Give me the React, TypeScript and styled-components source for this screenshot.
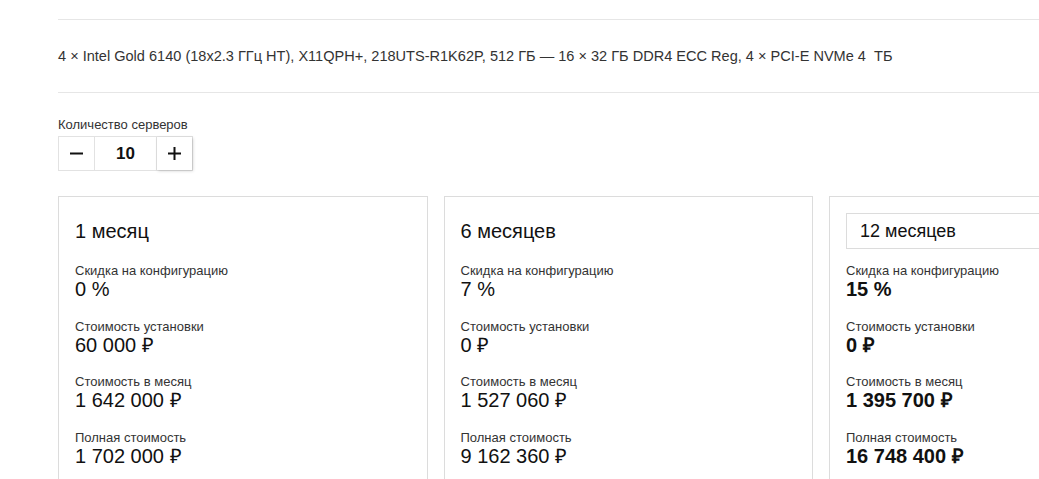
import React from "react";
import styled, { createGlobalStyle } from "styled-components";

const Global = createGlobalStyle`
  html, body {
    margin: 0;
    padding: 0;
    height: 479px;
    overflow: hidden;
    background: #fff;
  }
  body {
    font-family: "Liberation Sans", Arial, sans-serif;
    color: #111;
  }
`;

const Page = styled.div`
  padding-left: 58px;
  overflow: hidden;
`;

const Spec = styled.div`
  margin-top: 19px;
  border-top: 1px solid #e6e6e6;
  border-bottom: 1px solid #e6e6e6;
  padding: 26px 0;
  font-size: 14.55px;
  line-height: 20px;
  color: #333;
  white-space: nowrap;
`;

const QtyLabel = styled.div`
  margin-top: 24px;
  font-size: 13px;
  line-height: 15px;
  color: #333;
`;

const Stepper = styled.div`
  margin-top: 4px;
  display: inline-flex;
  height: 35px;
  border: 1px solid #e2e2e2;
  box-sizing: border-box;
`;

const StepButton = styled.div<{ $w: number; $shadow?: boolean }>`
  width: ${(p) => p.$w}px;
  display: flex;
  align-items: center;
  justify-content: center;
  box-shadow: ${(p) => (p.$shadow ? "1px 1px 3px rgba(0,0,0,0.18)" : "none")};
  color: #111;
`;

const StepValue = styled.div`
  width: 61px;
  border-left: 1px solid #e2e2e2;
  border-right: 1px solid #e2e2e2;
  display: flex;
  align-items: center;
  justify-content: center;
  font-size: 17px;
  font-weight: 700;
  color: #111;
`;

const Cards = styled.div`
  margin-top: 25px;
  display: grid;
  grid-template-columns: repeat(3, 369.5px);
  gap: 16px;
  width: max-content;
`;

const Card = styled.div`
  border: 1px solid #dcdcdc;
  padding: 16px;
  height: 320px;
`;

const Title = styled.div`
  height: 36px;
  line-height: 36px;
  font-size: 20px;
  color: #111;
`;

const SelectBox = styled.div`
  height: 36px;
  box-sizing: border-box;
  border: 1px solid #dcdcdc;
  padding-left: 13px;
  line-height: 34px;
  font-size: 18px;
  color: #111;
`;

const Items = styled.div`
  margin-top: 14px;
  display: flex;
  flex-direction: column;
  gap: 18.6px;
`;

const ItemLabel = styled.div`
  font-size: 13px;
  line-height: 15px;
  color: #333;
`;

const ItemValue = styled.div<{ $bold?: boolean }>`
  font-size: 20px;
  line-height: 22px;
  font-weight: ${(p) => (p.$bold ? 700 : 400)};
  color: #111;
`;

type Plan = {
  title: string;
  select?: boolean;
  bold?: boolean;
  values: string[];
};

const labels = [
  "Скидка на конфигурацию",
  "Стоимость установки",
  "Стоимость в месяц",
  "Полная стоимость",
];

const plans: Plan[] = [
  { title: "1 месяц", values: ["0 %", "60 000 ₽", "1 642 000 ₽", "1 702 000 ₽"] },
  { title: "6 месяцев", values: ["7 %", "0 ₽", "1 527 060 ₽", "9 162 360 ₽"] },
  {
    title: "12 месяцев",
    select: true,
    bold: true,
    values: ["15 %", "0 ₽", "1 395 700 ₽", "16 748 400 ₽"],
  },
];

const Minus = () => (
  <svg width="13" height="13" viewBox="0 0 13 13">
    <rect x="0" y="5.5" width="13" height="2" fill="#111" />
  </svg>
);

const Plus = () => (
  <svg width="13" height="13" viewBox="0 0 13 13">
    <rect x="0" y="5.5" width="13" height="2" fill="#111" />
    <rect x="5.5" y="0" width="2" height="13" fill="#111" />
  </svg>
);

export default function App() {
  return (
    <>
      <Global />
      <Page>
        <Spec>
          4 × Intel Gold 6140 (18x2.3 ГГц HT), X11QPH+, 218UTS-R1K62P, 512 ГБ — 16 × 32 ГБ DDR4 ECC Reg, 4 × PCI-E NVMe 4&nbsp; ТБ
        </Spec>
        <QtyLabel>Количество серверов</QtyLabel>
        <Stepper>
          <StepButton $w={35}>
            <Minus />
          </StepButton>
          <StepValue>10</StepValue>
          <StepButton $w={35} $shadow>
            <Plus />
          </StepButton>
        </Stepper>
        <Cards>
          {plans.map((p) => (
            <Card key={p.title}>
              {p.select ? <SelectBox>{p.title}</SelectBox> : <Title>{p.title}</Title>}
              <Items>
                {labels.map((l, i) => (
                  <div key={l}>
                    <ItemLabel>{l}</ItemLabel>
                    <ItemValue $bold={p.bold}>{p.values[i]}</ItemValue>
                  </div>
                ))}
              </Items>
            </Card>
          ))}
        </Cards>
      </Page>
    </>
  );
}
